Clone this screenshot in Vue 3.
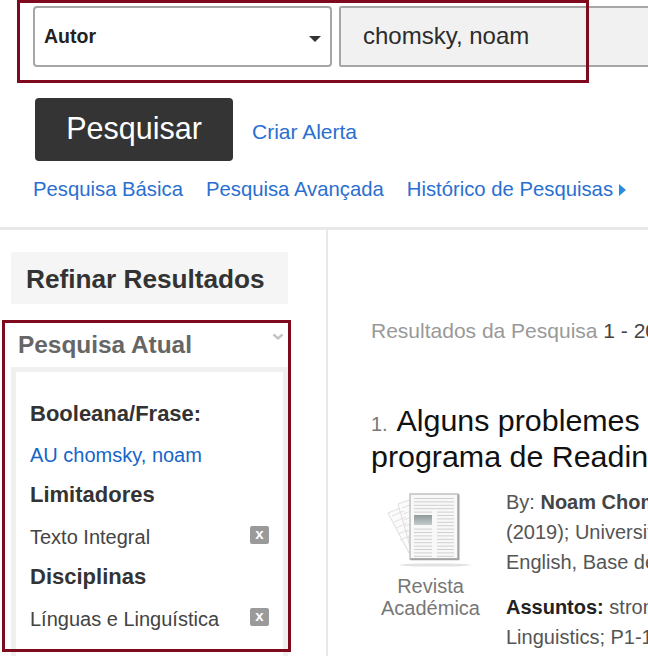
<template>
  <div class="page">
    <header class="search">
      <div class="search-row">
        <div class="field-select">
          <span>Autor</span>
          <i class="caret"></i>
        </div>
        <div class="field-input">chomsky, noam</div>
      </div>
      <div class="action-row">
        <button class="btn-search">Pesquisar</button>
        <a class="alert-link">Criar Alerta</a>
      </div>
      <nav class="search-links">
        <a>Pesquisa Básica</a>
        <a>Pesquisa Avançada</a>
        <a>Histórico de Pesquisas<i class="arrow"></i></a>
      </nav>
      <div class="mark mark-search"></div>
    </header>

    <div class="content">
      <aside class="sidebar">
        <h2 class="refine">Refinar Resultados</h2>
        <div class="current">
          <div class="current-head">
            <h3>Pesquisa Atual</h3>
            <svg class="chevron" width="12" height="8" viewBox="0 0 12 8">
              <path d="M1.5 1.5 6 5.5l4.5-4" fill="none" stroke="#c4c4c4" stroke-width="2.4" />
            </svg>
          </div>
          <div class="current-body">
            <h4>Booleana/Frase:</h4>
            <p class="term"><a>AU chomsky, noam</a></p>
            <h4>Limitadores</h4>
            <p class="term">Texto Integral<span class="remove">x</span></p>
            <h4>Disciplinas</h4>
            <p class="term">Línguas e Linguística<span class="remove">x</span></p>
          </div>
          <div class="mark mark-current"></div>
        </div>
      </aside>

      <main class="results">
        <div class="count">Resultados da Pesquisa <b>1 - 20</b></div>
        <h3 class="title"><span class="num">1.</span> Alguns problemes<br />programa de Reading</h3>
        <div class="record">
          <div class="type">
            <svg width="92" height="78" viewBox="0 0 92 78">
              <defs>
                <linearGradient id="pic" x1="0" y1="0" x2="0" y2="1">
                  <stop offset="0" stop-color="#8f9a9a" />
                  <stop offset="1" stop-color="#c4cccc" />
                </linearGradient>
              </defs>
              <ellipse cx="48" cy="72" rx="36" ry="1.6" fill="#e2e2e2" />
              <g fill="#fbfbfb" stroke="#dedede">
                <path d="M1 20 18 13l10 42-6 5z" />
                <path d="M11 11 25 6v54z" />
              </g>
              <g stroke="#e2e2e2">
                <path d="M5 23l12-5M7 29l12-5M9 35l11-5M11 41l10-4M13 47l9-4" />
                <path d="M15 15l8-3M16 21l8-3M17 27l7-3M18 33l6-2M19 39l5-2M20 45l4-1" />
              </g>
              <rect x="23" y="1" width="48" height="65" fill="#f8f8f8" stroke="#bdbdbd" stroke-width="1.4" />
              <path d="M23.5 66.2h48V1.5" fill="none" stroke="#a3a3a3" stroke-width="2" />
              <g stroke="#cfcfcf">
                <path v-for="d in lines" :key="d" :d="d" />
              </g>
              <rect x="27" y="22" width="18" height="10" fill="url(#pic)" />
            </svg>
            <div>Revista<br />Académica</div>
          </div>
          <div class="details">
            <p>By: <b>Noam Chomsky</b><br />(2019); University<br />English, Base de</p>
            <p><b class="dark">Assuntos:</b> strong<br />Linguistics; P1-1</p>
          </div>
        </div>
      </main>
    </div>
  </div>
</template>

<script setup>
// newspaper icon rows: full-width headline, then two columns around the picture
const lines = []
for (let y = 5.5; y < 64; y += 3.4) {
  if (y < 16) {
    lines.push(`M27 ${y}h40`)
    continue
  }
  if (y < 21 || y > 33) lines.push(`M27 ${y}h18`)
  lines.push(`M50 ${y}h17`)
}
</script>

<style>
html, body {
  margin: 0;
  background: #fff;
}
</style>

<style scoped>
.page {
  width: 648px;
  height: 656px;
  overflow: hidden;
  font-family: "Liberation Sans", Arial, sans-serif;
  color: #333;
}

a {
  color: #2a6fd0;
  text-decoration: none;
}

.search {
  position: relative;
  height: 221px;
  padding: 6px 0 0 33px;
  border-bottom: 3px solid #e8e8e8;
}

.search-row {
  display: flex;
  gap: 7px;
  height: 61px;
  width: 700px;
}

.field-select {
  width: 299px;
  box-sizing: border-box;
  border: 2px solid #a6a6a6;
  border-radius: 4px;
  display: flex;
  align-items: center;
  justify-content: space-between;
  padding: 0 9px 0 9px;
  font-size: 19.5px;
  font-weight: bold;
  color: #222;
}

.caret {
  border: 6px solid transparent;
  border-top: 6px solid #333;
  border-bottom: 0;
  margin-top: 4px;
}

.field-input {
  flex: 1;
  box-sizing: border-box;
  background: #f1f1f1;
  border: 2px solid #a6a6a6;
  border-radius: 2px 0 0 2px;
  padding: 0 22px;
  font-size: 24px;
  line-height: 56px;
  color: #2c2c2c;
}

.action-row {
  display: flex;
  align-items: center;
  margin: 31px 0 0 2px;
  gap: 19px;
}

.btn-search {
  width: 198px;
  height: 63px;
  border: none;
  border-radius: 4px;
  background: #343434;
  color: #fff;
  font-family: inherit;
  font-size: 30.5px;
  padding: 0 0 3px;
}

.alert-link {
  font-size: 21px;
  margin-top: 4px;
}

.search-links {
  display: flex;
  gap: 23px;
  margin-top: 16px;
  font-size: 20.3px;
  line-height: 24px;
}

.arrow {
  display: inline-block;
  border: 6px solid transparent;
  border-left: 7px solid #2a8be0;
  border-right: 0;
  margin-left: 6px;
}

.mark {
  position: absolute;
  box-sizing: border-box;
  border: 3px solid #7f0a1e;
  pointer-events: none;
}

.mark-search {
  left: 17px;
  top: 0;
  width: 572px;
  height: 83px;
}

.content {
  display: flex;
  height: 426px;
}

.sidebar {
  width: 328px;
  flex: none;
  box-sizing: border-box;
  border-right: 2px solid #e8e8e8;
  padding: 22px 38px 0 11px;
}

.refine {
  margin: 0;
  height: 52px;
  padding-left: 15px;
  background: #f5f5f5;
  font-size: 26.2px;
  line-height: 54px;
  color: #333;
}

.current {
  position: relative;
  margin-top: 16px;
}

.current-head {
  display: flex;
  justify-content: space-between;
  height: 47px;
}

.current-head h3 {
  margin: 0 0 0 7px;
  font-size: 24.4px;
  line-height: 50px;
  color: #666;
}

.chevron {
  margin: 13px 4px 0 0;
}

.current-body {
  border: 5px solid #f0f0f0;
  height: 320px;
  padding: 24px 14px 0 14px;
}

h4 {
  margin: 0;
  font-size: 22px;
  line-height: 36px;
  color: #333;
}

.term + h4 {
  margin: -1px 0 1px;
}

.term {
  position: relative;
  margin: 0;
  font-size: 20px;
  line-height: 46px;
  color: #444;
}

.term a {
  color: #1565c8;
}

.remove {
  position: absolute;
  right: 0;
  top: 12px;
  width: 19px;
  height: 18px;
  border-radius: 2px;
  background: #9a9a9a;
  color: #fff;
  font-size: 15px;
  font-weight: bold;
  line-height: 16px;
  text-align: center;
}

.mark-current {
  left: -9px;
  top: 0;
  width: 289px;
  height: 332px;
}

.results {
  flex: 1;
  min-width: 0;
  padding: 89px 0 0 43px;
  overflow: hidden;
  white-space: nowrap;
  font-size: 20px;
  color: #555;
}

.count {
  color: #999;
  font-size: 21px;
  line-height: 24px;
}

.count b {
  font-weight: normal;
  color: #444;
}

.title {
  margin: 59px 0 0;
  font-size: 30.4px;
  font-weight: normal;
  line-height: 36px;
  color: #111;
}

.num {
  font-size: 20px;
  line-height: 1;
  color: #777;
  margin-right: 2px;
}

.record {
  display: flex;
  gap: 16px;
  margin-top: 13px;
}

.type {
  width: 119px;
  flex: none;
  text-align: center;
  font-size: 20px;
  line-height: 22px;
  color: #777;
  padding-top: 6px;
}

.type svg {
  display: block;
  margin: 0 auto 4px 16px;
}

.details p {
  margin: 0 0 15px;
  line-height: 30px;
}

.details b {
  color: #444;
}

.details .dark {
  color: #222;
}
</style>
